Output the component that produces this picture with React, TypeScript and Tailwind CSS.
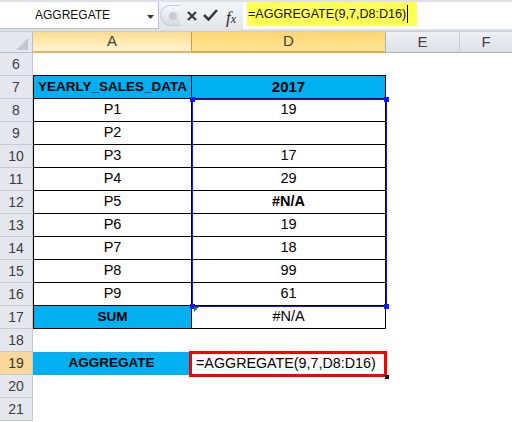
import React from "react";

const rowsData: { n: number; a: string; d: string; kind: "empty" | "head" | "data" | "sum" | "agg"; dBold?: boolean }[] = [
  { n: 6, a: "", d: "", kind: "empty" },
  { n: 7, a: "YEARLY_SALES_DATA", d: "2017", kind: "head" },
  { n: 8, a: "P1", d: "19", kind: "data" },
  { n: 9, a: "P2", d: "", kind: "data" },
  { n: 10, a: "P3", d: "17", kind: "data" },
  { n: 11, a: "P4", d: "29", kind: "data" },
  { n: 12, a: "P5", d: "#N/A", kind: "data", dBold: true },
  { n: 13, a: "P6", d: "19", kind: "data" },
  { n: 14, a: "P7", d: "18", kind: "data" },
  { n: 15, a: "P8", d: "99", kind: "data" },
  { n: 16, a: "P9", d: "61", kind: "data" },
  { n: 17, a: "SUM", d: "#N/A", kind: "sum" },
  { n: 18, a: "", d: "", kind: "empty" },
  { n: 19, a: "AGGREGATE", d: "=AGGREGATE(9,7,D8:D16)", kind: "agg" },
  { n: 20, a: "", d: "", kind: "empty" },
  { n: 21, a: "", d: "", kind: "empty" },
];

function Row({ r }: { r: (typeof rowsData)[number] }) {
  const isTable = r.kind === "head" || r.kind === "data" || r.kind === "sum";
  const above7 = r.n === 6;
  const rowHead =
    r.n === 19
      ? "bg-[#f9d99a] text-[#333]"
      : "bg-[#e4e8ee] text-[#3c3c3c]";
  let aCls = "w-[159px] h-full flex items-center justify-center ";
  let dCls = "w-[194px] h-full flex items-center justify-center ";
  if (isTable) {
    aCls += "border-r border-b border-l border-black ";
    dCls += "border-r border-b border-black ";
  }
  if (above7) {
    aCls += "border-b border-black ";
    dCls += "border-b border-black ";
  }
  if (r.kind === "head" || r.kind === "sum") {
    aCls += "bg-[#00b0f0] font-bold text-[13.5px] ";
  } else {
    aCls += "text-[14.5px] ";
  }
  if (r.kind === "head") dCls += "bg-[#00b0f0] font-bold text-[15px] ";
  else dCls += "text-[14.5px] ";
  if (r.dBold) dCls += "font-bold ";
  if (r.kind === "agg") {
    aCls = "w-[157px] mr-[2px] h-full flex items-center justify-center bg-[#00b0f0] font-bold text-[13.5px] ";
    dCls = "w-[194px] h-full flex items-center justify-start pl-[4px] text-[14.3px] ";
  }
  return (
    <div className="flex h-[23px]">
      <div
        className={
          "w-[33px] h-full flex items-center justify-center text-[14px] border-b border-r border-[#c3cad4] " +
          rowHead
        }
      >
        {r.n}
      </div>
      <div className={aCls}>{r.a}</div>
      <div className={dCls}>{r.d}</div>
      <div className="w-[74px] h-full" />
      <div className="w-[52px] h-full" />
    </div>
  );
}

export default function App() {
  return (
    <div
      className="relative w-[512px] h-[422px] overflow-hidden bg-white text-black"
      style={{ fontFamily: '"Liberation Sans", Arial, sans-serif' }}
    >
      {/* Formula bar */}
      <div className="h-[32px] bg-[#dde1e7] pt-[2px] flex items-start border-b border-[#c9ced6]">
        <div className="w-[159px] h-[27px] bg-white border-r border-b border-[#bcc3cc] flex items-center relative">
          <span className="ml-[35px] text-[12px] text-[#111]">AGGREGATE</span>
          <svg className="absolute left-[147px] top-[13px]" width="7" height="4" viewBox="0 0 7 4">
            <path d="M0 0 L7 0 L3.5 4 Z" fill="#333" />
          </svg>
        </div>
        <div className="w-[84px] h-[27px] flex items-center relative bg-gradient-to-b from-[#f3f5f8] to-[#e2e6eb]">
          <div className="absolute left-[1px] top-[3px] w-[20px] h-[21px] rounded-l-full bg-gradient-to-b from-[#f7f8fa] to-[#d6dbe2] border border-[#c5cad2] border-r-0 flex items-center justify-center">
            <div className="w-[8px] h-[8px] rounded-full bg-[#c8ccd2] ml-[4px]" />
          </div>
          <svg className="absolute left-[28px] top-[9px]" width="10" height="10" viewBox="0 0 10 10">
            <path d="M1 1 L9 9 M9 1 L1 9" stroke="#3a3a3a" strokeWidth="2.2" />
          </svg>
          <svg className="absolute left-[44px] top-[7px]" width="15" height="12" viewBox="0 0 15 12">
            <path d="M1 6 L5.5 10.5 L14 1" stroke="#3a3a3a" strokeWidth="2.6" fill="none" />
          </svg>
          <span
            className="absolute left-[67px] top-[3px] text-[17px] italic text-[#2a2a2a]"
            style={{ fontFamily: '"Liberation Serif", "Times New Roman", serif' }}
          >
            f<span className="text-[12px]">x</span>
          </span>
        </div>
        <div className="flex-1 h-[27px] bg-white flex items-start">
          <div className="ml-[4px] h-[24px] w-[170px] bg-[#ffff55] flex items-center">
            <span className="ml-[1px] text-[12.6px] text-[#111]">=AGGREGATE(9,7,D8:D16)</span>
            <span className="ml-[1px] w-[1px] h-[18px] bg-black" />
          </div>
        </div>
      </div>

      {/* Column headers */}
      <div className="flex h-[21px] text-[15px] text-[#444]">
        <div className="w-[33px] h-full bg-[#e4e8ee] border-r border-b border-[#b7bfca] relative">
          <svg className="absolute left-[16px] top-[6px]" width="12" height="12" viewBox="0 0 12 12">
            <path d="M12 0 L12 12 L0 12 Z" fill="#c3c8cf" />
          </svg>
        </div>
        <div className="w-[159px] h-full flex items-center justify-center bg-gradient-to-b from-[#fbdc8c] to-[#fff4d2] border-b-2 border-[#eab25a] border-r border-r-[#d99a3a]">
          A
        </div>
        <div className="w-[194px] h-full flex items-center justify-center bg-gradient-to-b from-[#fdd56c] to-[#fde49a] border-b-2 border-[#e8a93f] border-r border-r-[#a9b2bd]">
          D
        </div>
        <div className="w-[74px] h-full flex items-center justify-center bg-gradient-to-b from-[#eef0f3] to-[#dde1e6] border-b border-[#a9b2bd] border-r border-r-[#c9ced5]">
          E
        </div>
        <div className="w-[52px] h-full flex items-center justify-center bg-gradient-to-b from-[#eef0f3] to-[#dde1e6] border-b border-[#a9b2bd]">
          F
        </div>
      </div>

      {rowsData.map((r) => (
        <Row key={r.n} r={r} />
      ))}

      {/* Selection border D8:D16 */}
      <div className="absolute left-[192px] top-[99px] w-[195px] h-[208px] border border-[#1515ff] pointer-events-none" />
      <div className="absolute left-[190px] top-[97px] w-[5px] h-[5px] bg-[#1515ff]" />
      <div className="absolute left-[384px] top-[97px] w-[5px] h-[5px] bg-[#1515ff]" />
      <div className="absolute left-[190px] top-[304px] w-[5px] h-[5px] bg-[#1515ff]" />
      <div className="absolute left-[384px] top-[304px] w-[5px] h-[5px] bg-[#1515ff]" />
      {/* green error triangle */}
      <svg className="absolute left-[194px] top-[307px]" width="5" height="5" viewBox="0 0 5 5">
        <path d="M0 0 L5 0 L0 5 Z" fill="#1a8a1a" />
      </svg>

      {/* Red box around D19 */}
      <div className="absolute left-[189px] top-[351px] w-[198px] h-[26px] border-[3px] border-[#ff0000] pointer-events-none" />
      <div className="absolute left-[385px] top-[375px] w-[4px] h-[4px] bg-black" />
    </div>
  );
}
